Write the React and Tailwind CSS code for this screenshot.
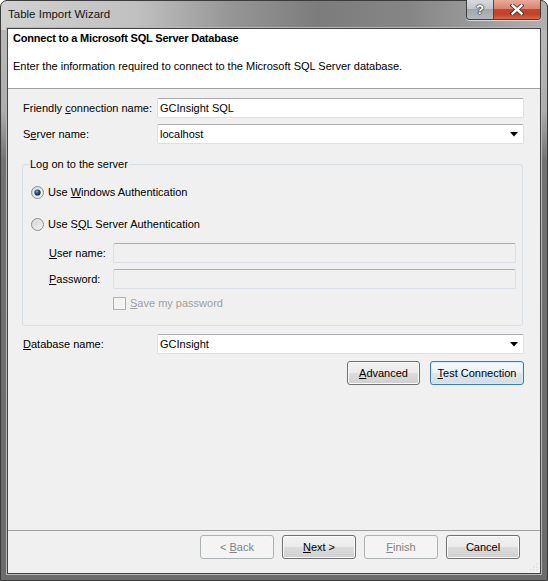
import React from 'react';

// Windows 7 style "Table Import Wizard" dialog

function U({ children }) {
  return <span className="underline decoration-1 underline-offset-[1px]">{children}</span>;
}

function TextBox({ value, disabled, combo }) {
  return (
    <div
      className={`flex-1 h-[20px] flex items-center rounded-[2px] border border-[#dbdfe6] border-t-[#abadb3] pl-[2px] pr-[4px] ${
        disabled ? 'bg-[#f0f0f0] border-[#b4b4b4] border-t-[#a6a6a6]' : 'bg-white'
      }`}
    >
      <span className="flex-1 leading-[13px]">{value}</span>
      {combo && (
        <svg width="8" height="5" viewBox="0 0 8 5" className="mr-[1px]">
          <polygon points="0,0 8,0 4,4.5" fill="#000" />
        </svg>
      )}
    </div>
  );
}

function Radio({ checked }) {
  return (
    <svg width="13" height="13" viewBox="0 0 13 13">
      <defs>
        <linearGradient id={checked ? 'rg1' : 'rg2'} x1="0" y1="0" x2="1" y2="1">
          <stop offset="0" stopColor="#cfd0d2" />
          <stop offset="1" stopColor="#f6f6f6" />
        </linearGradient>
        <radialGradient id="dot" cx="0.4" cy="0.35" r="0.7">
          <stop offset="0" stopColor="#8ab4d8" />
          <stop offset="0.45" stopColor="#2a4f76" />
          <stop offset="1" stopColor="#0f1f30" />
        </radialGradient>
      </defs>
      <circle cx="6.5" cy="6.5" r="6" fill={`url(#${checked ? 'rg1' : 'rg2'})`} stroke="#8e8f8f" strokeWidth="1" />
      <circle cx="6.5" cy="6.5" r="4.3" fill="none" stroke="#e8e8e8" strokeWidth="0.8" />
      {checked && <circle cx="6.5" cy="6.5" r="3.1" fill="url(#dot)" />}
    </svg>
  );
}

function Button({ children, width, disabled, focused }) {
  let cls =
    'border-[#707070] text-black bg-[linear-gradient(180deg,#f2f2f2_0%,#ebebeb_48%,#dddddd_50%,#cfcfcf_100%)] shadow-[inset_0_0_0_1px_#fbfbfb]';
  if (disabled) cls = 'border-[#adb2b5] text-[#838383] bg-[#f4f4f4]';
  if (focused)
    cls =
      'border-[#3c7fb1] text-black bg-[linear-gradient(180deg,#f6f9fb_0%,#edf2f5_48%,#dfe7ec_50%,#d3dde3_100%)] shadow-[inset_0_0_0_1px_#d2ecf9]';
  return (
    <div className={`${width} h-full flex items-center justify-center rounded-[3px] border ${cls}`}>
      <span className="leading-[13px]">{children}</span>
    </div>
  );
}

export default function App() {
  return (
    <div className="w-[548px] h-[581px] flex flex-col font-['Liberation_Sans',Arial,sans-serif] text-[11px] text-black rounded-t-[7px] border border-[#3b3b3b] px-[6px] pb-[6px] bg-[#6b6b6b] bg-no-repeat bg-[linear-gradient(90deg,#d2d2d2_0%,#c0c0c0_25%,#969696_42%,#7c7c7c_58%,#868686_75%,#b0b0b0_100%),linear-gradient(180deg,#bdbdbd_0px,#adadad_110px,#727272_160px,#6b6b6b_100%)] bg-[length:100%_29px,100%_100%]">
      {/* title bar */}
      <div className="h-[27px] flex items-start">
        <span className="pl-[1px] text-[11.5px] leading-[27px] text-[#151515]">Table Import Wizard</span>
        <div className="ml-auto -mt-[1px] flex h-[20px] rounded-b-[4px] border border-t-0 border-[#3e3e3e] overflow-hidden shadow-[0_1px_0_#d8d8d8]">
          <div className="w-[27px] h-full flex items-center justify-center border-r border-[#4a4a4a] bg-[linear-gradient(180deg,#d8dbde_0%,#c3c7cb_45%,#a2a7ac_50%,#b3b8bc_100%)]">
            <span className="font-bold text-[13px] leading-none text-white [text-shadow:0_0_1px_#222,0_0_1px_#222,0_0_2px_#333]">?</span>
          </div>
          <div className="w-[46px] h-full flex items-center justify-center bg-[linear-gradient(180deg,#e9a99a_0%,#d98470_45%,#c6452d_50%,#c0402a_75%,#d56a4c_100%)]">
            <svg width="14" height="11" viewBox="0 0 14 11">
              <path d="M2.5 1.5 L11.5 9.5 M11.5 1.5 L2.5 9.5" stroke="#4a2a22" strokeWidth="4" strokeLinecap="square" />
              <path d="M2.5 1.5 L11.5 9.5 M11.5 1.5 L2.5 9.5" stroke="#ffffff" strokeWidth="2.4" strokeLinecap="square" />
            </svg>
          </div>
        </div>
      </div>

      {/* client area */}
      <div className="flex-1 flex flex-col border border-[#424242] shadow-[0_0_0_1px_#b8b8b8] bg-[#f0f0f0]">
        {/* header */}
        <div className="h-[60px] bg-white border-b border-[#a0a0a0] pl-[5px] pt-[3px]">
          <div className="font-bold leading-[13px] tracking-[-0.2px]">Connect to a Microsoft SQL Server Database</div>
          <div className="mt-[15px] leading-[13px]">Enter the information required to connect to the Microsoft SQL Server database.</div>
        </div>

        {/* body */}
        <div className="flex-1 flex flex-col pl-[14px] pr-[16px]">
          <div className="mt-[9px] flex items-center">
            <span className="w-[135px] pl-[1px]">Friendly <U>c</U>onnection name:</span>
            <TextBox value="GCInsight SQL" />
          </div>
          <div className="mt-[6px] flex items-center">
            <span className="w-[135px] pl-[1px]">S<U>e</U>rver name:</span>
            <TextBox value="localhost" combo />
          </div>

          <fieldset className="mt-[14px] mr-[1px] border border-[#d5dfe5] rounded-[3px] pb-[15px]">
            <legend className="ml-[6px] px-[1px] leading-[13px]">Log on to the server</legend>
            <div className="mt-[13px] pl-[8px] h-[16px] flex items-center gap-[4px]">
              <Radio checked />
              <span>Use <U>W</U>indows Authentication</span>
            </div>
            <div className="mt-[16px] pl-[8px] h-[16px] flex items-center gap-[4px]">
              <Radio />
              <span>Use S<U>Q</U>L Server Authentication</span>
            </div>
            <div className="mt-[11px] pl-[26px] pr-[6px] flex items-center">
              <span className="w-[64px]"><U>U</U>ser name:</span>
              <TextBox disabled />
            </div>
            <div className="mt-[6px] pl-[26px] pr-[6px] flex items-center">
              <span className="w-[64px]"><U>P</U>assword:</span>
              <TextBox disabled />
            </div>
            <div className="mt-[8px] pl-[90px] h-[13px] flex items-center gap-[4px]">
              <div className="w-[13px] h-[13px] border border-[#b1b1b1] bg-[#f4f4f4]" />
              <span className="text-[#a0a0a0]"><U>S</U>ave my password</span>
            </div>
          </fieldset>

          <div className="mt-[8px] flex items-center">
            <span className="w-[135px] pl-[1px]"><U>D</U>atabase name:</span>
            <TextBox value="GCInsight" combo />
          </div>
          <div className="mt-[7px] h-[24px] flex justify-end gap-[10px]">
            <Button width="w-[73px]"><U>A</U>dvanced</Button>
            <Button width="w-[94px]" focused><U>T</U>est Connection</Button>
          </div>
        </div>

        {/* footer */}
        <div className="relative h-[43px] border-t border-[#a0a0a0] pt-[4px] pr-[20px] flex justify-end">
          <div className="h-[24px] flex gap-[8px]">
            <Button width="w-[74px]" disabled>&lt; <U>B</U>ack</Button>
            <Button width="w-[74px]"><U>N</U>ext &gt;</Button>
            <Button width="w-[74px]" disabled><U>F</U>inish</Button>
            <Button width="w-[74px]">Cancel</Button>
          </div>
          <svg width="10" height="10" viewBox="0 0 10 10" className="absolute right-[1px] bottom-[1px]">
            {[
              [8, 2], [8, 5], [5, 5], [8, 8], [5, 8], [2, 8],
            ].map(([x, y]) => (
              <g key={`${x}-${y}`}>
                <rect x={x + 0.5} y={y + 0.5} width="1" height="1" fill="#ffffff" />
                <rect x={x - 0.5} y={y - 0.5} width="1" height="1" fill="#b6bcc6" />
              </g>
            ))}
          </svg>
        </div>
      </div>
    </div>
  );
}
